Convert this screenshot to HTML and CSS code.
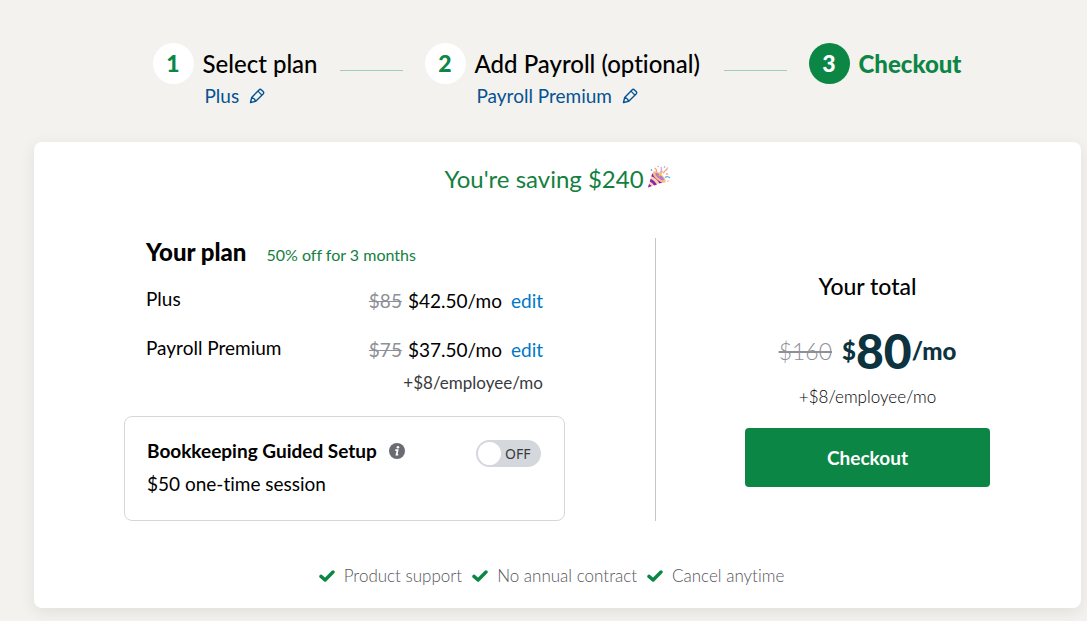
FILE: index.html
```html
<!DOCTYPE html>
<html lang="en">
<head>
<meta charset="utf-8">
<meta name="viewport" content="width=device-width, initial-scale=1">
<title>Checkout</title>
<link rel="stylesheet" href="styles.css">
</head>
<body>
<svg class="sprite" aria-hidden="true">
  <symbol id="pencil" viewBox="0 0 16 16">
    <path d="M1.500 14.500l1.200-5L10 1.900a1.800 1.800 0 0 1 2.500 0l1.600 1.600a1.800 1.800 0 0 1 0 2.500L6.500 13.400zM2.800 9.600q3 .6 3.600 3.600" fill="none" stroke="currentColor" stroke-width="1.400" stroke-linejoin="round" stroke-linecap="round"/>
    <path d="M9 3.200L12.800 7" fill="none" stroke="currentColor" stroke-width="1.200"/>
  </symbol>
  <symbol id="check" viewBox="0 0 16 12">
    <path d="M2 6.400L6.100 10L14 2" fill="none" stroke="currentColor" stroke-width="3.400" stroke-linecap="round" stroke-linejoin="round"/>
  </symbol>
</svg>
<div class="page">
  <ol class="steps">
    <li class="step">
      <span class="step-number">1</span>
      <div class="step-text">
        <span class="step-title">Select plan</span>
        <a class="step-choice" href="#plan">Plus <svg class="pencil" aria-hidden="true"><use href="#pencil"/></svg></a>
      </div>
    </li>
    <li class="step-line" aria-hidden="true"></li>
    <li class="step">
      <span class="step-number">2</span>
      <div class="step-text">
        <span class="step-title">Add Payroll (optional)</span>
        <a class="step-choice" href="#payroll">Payroll Premium <svg class="pencil" aria-hidden="true"><use href="#pencil"/></svg></a>
      </div>
    </li>
    <li class="step-line" aria-hidden="true"></li>
    <li class="step step-current" aria-current="step">
      <span class="step-number">3</span>
      <div class="step-text"><span class="step-title">Checkout</span></div>
    </li>
  </ol>

  <main class="card">
    <p class="saving">You're saving $240
      <svg class="party" viewBox="0 0 24 24" aria-hidden="true">
        <path d="M1 22.500L5 9Q14 8 19 16z" fill="#fbd3ae"/>
        <path d="M1 22.500L2 19l2.900 2.100zM2.800 16.400l.8-2.700q4.400 2 6.400 5.800l-2.800 1.100q-1.400-2.800-4.400-4.200zM4.400 11.200L5.200 8.400q8 2.600 10.400 9.000l-3.100 1.200Q10 13.500 4.400 11.200z" fill="#8a1fb0"/>
        <ellipse cx="12.200" cy="12" rx="3.400" ry="8" transform="rotate(-50 12.200 12)" fill="#f9c08a"/>
        <ellipse cx="12.600" cy="11.600" rx="1.700" ry="5.400" transform="rotate(-50 12.600 11.600)" fill="#b57acb"/>
        <path d="M12 11l3.500-5" stroke="#f6c34d" stroke-width="1.800"/>
        <path d="M9.500 7q.5-3-2-4" fill="none" stroke="#f5a26e" stroke-width="1.200"/>
        <path d="M13 8q2.500-3 1-6" fill="none" stroke="#d3a9ee" stroke-width="1.400"/>
        <path d="M16.500 8.500q.5-2.500 2-3t2-3" fill="none" stroke="#f78f7a" stroke-width="1.200"/>
        <path d="M18 12.500q2.500-2 5 .5" fill="none" stroke="#5db4ee" stroke-width="1.400"/>
        <g fill="#f5a26e"><circle cx="11" cy="1.500" r=".8"/><circle cx="20" cy="9" r=".9"/><circle cx="21" cy="16" r=".8"/></g>
        <g fill="#5db4ee"><circle cx="4.500" cy="5" r=".9"/><circle cx="17.500" cy="2" r=".8"/></g>
      </svg>
    </p>

    <div class="columns">
      <section class="plan">
        <div class="plan-head">
          <h2 class="plan-title">Your plan</h2>
          <span class="discount">50% off for 3 months</span>
        </div>
        <ul class="items">
          <li class="item">
            <span class="item-name">Plus</span>
            <s class="old-price">$85</s>
            <span class="price">$42.50/mo</span>
            <a class="edit" href="#plan">edit</a>
          </li>
          <li class="item">
            <span class="item-name">Payroll Premium</span>
            <s class="old-price">$75</s>
            <span class="price">$37.50/mo</span>
            <a class="edit" href="#payroll">edit</a>
          </li>
        </ul>
        <p class="item-note">+$8/employee/mo</p>
        <div class="addon">
          <div class="addon-text">
            <div class="addon-head">
              <label class="addon-title" for="setup">Bookkeeping Guided Setup</label>
              <svg class="info" viewBox="0 0 16 16" role="img" aria-label="More information">
                <circle cx="8" cy="8" r="8" fill="#6b6c72"/>
                <circle cx="8.900" cy="4.300" r="1.300" fill="#fff"/>
                <path d="M6.300 7.200h2.300l-1.100 4.500h1.700" fill="none" stroke="#fff" stroke-width="1.700"/>
              </svg>
            </div>
            <p class="addon-price">$50 one-time session</p>
          </div>
          <label class="toggle">
            <input class="toggle-input" id="setup" type="checkbox" role="switch">
            <span class="toggle-knob"></span>
            <span class="toggle-state">OFF</span>
          </label>
        </div>
      </section>

      <section class="total">
        <h2 class="total-title">Your total</h2>
        <p class="total-price">
          <s class="total-old">$160</s>
          <span class="total-new"><span>$</span><strong class="total-amount">80</strong><span>/mo</span></span>
        </p>
        <p class="total-note">+$8/employee/mo</p>
        <button class="checkout" type="button">Checkout</button>
      </section>
    </div>

    <ul class="perks">
      <li class="perk"><svg class="check" aria-hidden="true"><use href="#check"/></svg>Product support</li>
      <li class="perk"><svg class="check" aria-hidden="true"><use href="#check"/></svg>No annual contract</li>
      <li class="perk"><svg class="check" aria-hidden="true"><use href="#check"/></svg>Cancel anytime</li>
    </ul>
  </main>
</div>
</body>
</html>
```
FILE: styles.css
```css
* { box-sizing: border-box; }

body {
  margin: 0;
  background: #f4f2ee;
  color: #000;
  font-family: Lato, "Liberation Sans", sans-serif;
  font-size: 19px;
  font-variant-ligatures: none;
  line-height: 24px;
}

h2, p, ul, ol { margin: 0; padding: 0; }
ul, ol { list-style: none; }
a { text-decoration: none; }
.sprite { display: none; }

.page { padding: 43px 6px 13px 34px; }

/* Steps */
.steps {
  display: grid;
  grid-template-columns: 165px 63px 277px 63px 154px;
  column-gap: 22px;
  justify-content: center;
  margin-bottom: 34px;
}
.step { display: flex; gap: 9px; white-space: nowrap; }
.step-number {
  flex: none;
  width: 41px;
  height: 41px;
  border-radius: 50%;
  background: #fff;
  color: #0c8645;
  font-size: 23px;
  font-weight: 900;
  line-height: 40px;
  text-align: center;
}
.step-text { display: flex; flex-direction: column; }
.step-title { font-size: 24px; font-weight: 500; line-height: 41px; }
.step-choice {
  display: flex;
  align-items: center;
  gap: 10px;
  padding-left: 2px;
  color: #055393;
}
.pencil { width: 16px; height: 16px; }
.step-line { height: 1px; margin-top: 27px; background: #9fd0b5; }
.step-current { color: #0c8645; }
.step-current .step-number { background: #0c8645; color: #fff; }
.step-current .step-title { font-weight: 900; }

/* Card */
.card {
  padding: 20px 0;
  border-radius: 8px;
  background: #fff;
  box-shadow: 0 4px 16px rgba(0, 0, 0, 0.08);
}
.saving {
  display: flex;
  justify-content: center;
  gap: 3px;
  margin-bottom: 42px;
  color: #14803f;
  font-size: 24px;
  line-height: 34px;
}
.party { width: 24px; height: 24px; margin-top: 3px; }
.columns { display: grid; grid-template-columns: 622fr 425fr; }

/* Plan */
.plan { padding: 0 90px; border-right: 1px solid #c4c5c7; }
.plan-head { display: flex; align-items: baseline; gap: 20px; margin-bottom: 22px; padding: 0 22px; }
.plan-title { font-size: 24px; font-weight: 900; line-height: 28px; }
.discount { color: #14803f; font-size: 16px; }
.items { display: grid; gap: 25px; padding: 0 22px; }
.item { display: flex; }
.item-name { flex: 1; line-height: 20px; }
.old-price { margin-right: 6px; color: #8d9096; }
.edit { margin-left: 9px; color: #0077c5; }
.item-note {
  margin: 10px 0 22px;
  padding-right: 22px;
  color: #393a3d;
  font-size: 17px;
  line-height: 22px;
  text-align: right;
}
.addon {
  display: flex;
  justify-content: space-between;
  padding: 22px 23px 24px 22px;
  border: 1px solid #d4d7dc;
  border-radius: 8px;
}
.addon-head { display: flex; align-items: center; gap: 12px; margin-bottom: 9px; }
.addon-title { font-weight: 700; }
.info { width: 16px; height: 16px; }
.toggle {
  display: flex;
  align-items: center;
  gap: 4px;
  width: 65px;
  height: 27px;
  margin-top: 1px;
  padding: 2px;
  border-radius: 14px;
  background: #d4d7dc;
  color: #393a3d;
  font-family: "Noto Sans", sans-serif;
  font-size: 14px;
}
.toggle-input { position: absolute; opacity: 0; }
.toggle-knob { width: 23px; height: 23px; border-radius: 50%; background: #fff; }

/* Total */
.total {
  display: flex;
  flex-direction: column;
  align-items: center;
  padding: 33px 2px 0 0;
}
.total-title { font-size: 23px; font-weight: 500; line-height: 30px; }
.total-price { display: flex; align-items: center; gap: 10px; margin: 20px 0 5px; height: 60px; }
.total-old { color: #8d9096; font-size: 23px; font-weight: 300; }
.total-new {
  display: flex;
  align-items: center;
  color: #0d333f;
  font-size: 24px;
  font-weight: 900;
}
.total-amount { font-size: 48px; font-weight: 900; line-height: 60px; }
.total-note { margin-bottom: 20px; font-size: 17px; line-height: 22px; font-weight: 300; }
.checkout {
  width: 245px;
  height: 59px;
  border: 0;
  border-radius: 4px;
  background: #0c8645;
  color: #fff;
  font: inherit;
  font-weight: 700;
}

/* Perks */
.perks { display: flex; justify-content: center; gap: 10px; margin-top: 43px; padding-right: 12px; }
.perk { display: flex; align-items: center; gap: 9px; color: #55565c; font-size: 17px; font-weight: 300; }
.check { width: 16px; height: 12px; color: #0c8645; }
```
